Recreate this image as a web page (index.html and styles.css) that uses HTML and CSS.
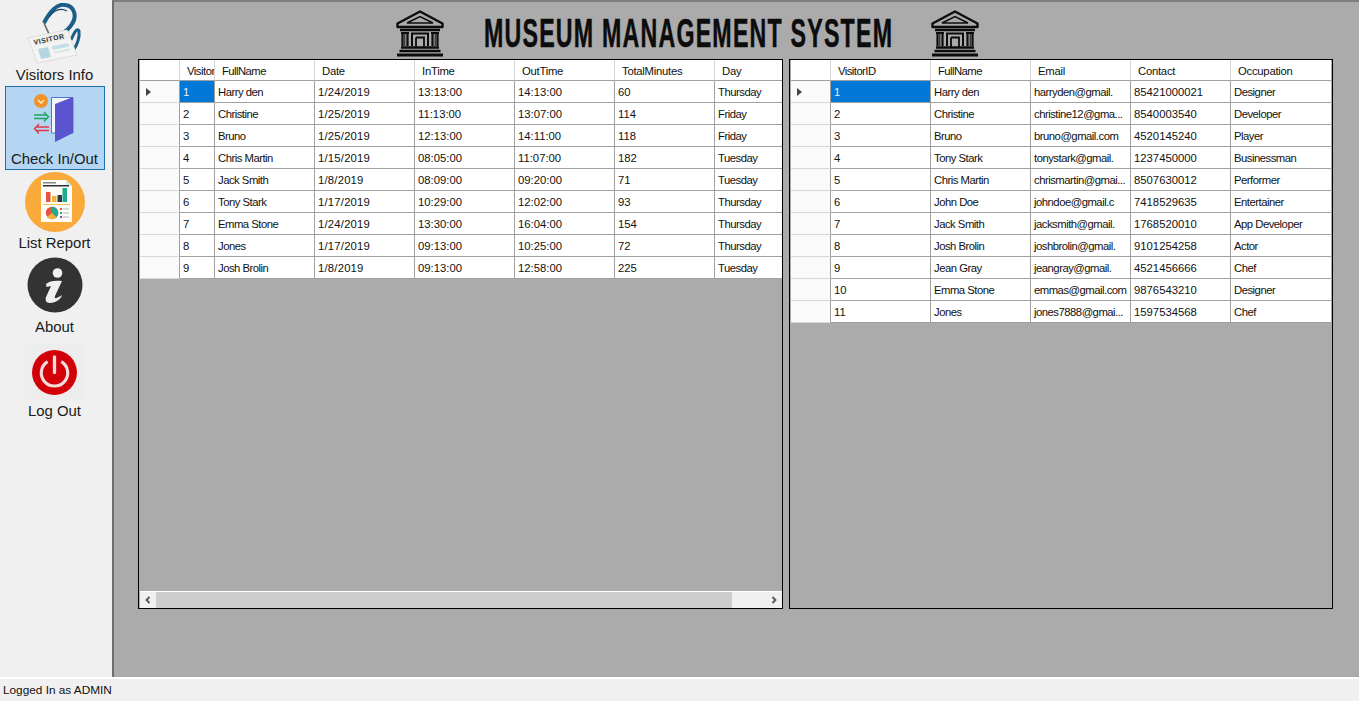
FILE: index.html
```html
<!DOCTYPE html>
<html lang="en">
<head>
<meta charset="utf-8">
<title>Museum Management System</title>
<link rel="stylesheet" href="styles.css">
</head>
<body>
<svg width="0" height="0" class="defs">
  <symbol id="museum" viewBox="0 0 50 50">
    <g fill="none" stroke="#0c0c0c">
      <path d="M25 2.500 L2.500 14.500 V18 H47.500 V14.500 Z" stroke-width="2.400" stroke-linejoin="round"/>
      <path d="M12 14 L25 7.500 L38 14 Z" stroke-width="1.500"/>
      <path d="M5 21 H45" stroke-width="2.600"/>
      <path d="M6 24 H14 M36 24 H44" stroke-width="2.200"/>
      <path d="M7.500 25 V37 M12.500 25 V37 M37.500 25 V37 M42.500 25 V37" stroke-width="2.200"/>
      <path d="M9.800 25 V37 M40.200 25 V37" stroke-width="1"/>
      <path d="M16 24.500 H34 M17 24.500 V37 M33 24.500 V37" stroke-width="2"/>
      <path d="M21 28.500 H29 V38 M21 28.500 V38" stroke-width="1.800"/>
      <path d="M6 38.500 H44" stroke-width="2.400"/>
      <path d="M4.500 42 H45.500" stroke-width="2.400"/>
      <path d="M2 46 H48" stroke-width="3"/>
    </g>
  </symbol>
</svg>
<div class="app">
  <div class="workspace">
    <nav class="side">
      <a class="nav-item">
        <svg width="60" height="64" viewBox="0 0 60 64">
          <path d="M19 20 C24 10 32 0 40 2 C50 3 52 14 47 21 C44 26 40 29 36 31" fill="none" stroke="#1a5f88" stroke-width="4"/>
          <path d="M24 14 C30 6 36 5 42 8" fill="none" stroke="#12405f" stroke-width="1.200"/>
          <path d="M46 37 C49 30 52 24 54 28 C55 34 52 42 49 46" fill="none" stroke="#1a5f88" stroke-width="3"/>
          <path d="M19 20 L24 31" stroke="#66727a" stroke-width="1.800"/>
          <polygon points="3,35 42,27 52,52 12,60" fill="#f4f5f2" stroke="#dcdedb"/>
          <polygon points="7,36 40,29 43,36 10,43" fill="#eceeea"/>
          <text class="badge-text" transform="translate(24.500 38.500) rotate(-12)" text-anchor="middle">VISITOR</text>
          <polygon points="13,46 23,44 26,54 16,56" fill="#b3d6e2"/>
          <polygon points="27,43 43,40 44.500,43.500 28,47" fill="#c3dfe6"/>
          <polygon points="29,49 45,45.500 45.500,47 29.500,50.500" fill="#cfe3e8"/>
        </svg>
        <span>Visitors Info</span>
      </a>
      <a class="nav-item active">
        <svg width="44" height="50" viewBox="0 0 44 50">
          <circle cx="8" cy="8" r="7" fill="#f0932b"/>
          <path d="M5 7 L8 10 L11 7" fill="none" stroke="#fde3b5" stroke-width="1.600"/>
          <path d="M1 22 H14 M1 25.500 H14 M11 19 L15.500 23.700 L11 28.500" fill="none" stroke="#1ea65a" stroke-width="1.400"/>
          <path d="M16 34 H3 M16 37.500 H3 M6 31 L1.500 35.700 L6 40.500" fill="none" stroke="#e3344a" stroke-width="1.400"/>
          <path d="M18.500 4.500 H40 V40 H18.500 Z" fill="#f2f5fc" stroke="#4d74d4"/>
          <polygon points="22,11 40,4 40,40 22,49" fill="#5a55cf"/>
        </svg>
        <span>Check In/Out</span>
      </a>
      <a class="nav-item">
        <svg class="ico-report" width="60" height="60" viewBox="0 0 60 60">
          <circle cx="30" cy="30" r="30" fill="#faa93b"/>
          <path d="M16 8 H41 L47 14 V50 H16 Z" fill="#fdfcf6"/>
          <path d="M41 8 L47 14 H41 Z" fill="#cfe4e6"/>
          <rect x="18" y="10" width="13" height="1.500" fill="#7a8a90"/>
          <rect x="18" y="13" width="26" height="1.500" fill="#2c3238"/>
          <rect x="21" y="20" width="4.500" height="10" fill="#e5543c"/>
          <rect x="27" y="24" width="4.500" height="6" fill="#f0b33a"/>
          <rect x="32.500" y="23" width="4.500" height="7" fill="#2c3c4a"/>
          <rect x="37.500" y="16" width="4.500" height="14" fill="#1fa98f"/>
          <rect x="18" y="32" width="27" height="1" fill="#f0c34a"/>
          <circle cx="27" cy="41" r="6.200" fill="#e5543c"/>
          <path d="M27 41 L27 34.800 A6.200 6.200 0 0 1 31.400 45.400 Z" fill="#1fa98f"/>
          <path d="M27 41 L31.400 45.400 A6.200 6.200 0 0 1 22 44.700 Z" fill="#f0b33a"/>
          <rect x="35" y="36" width="2" height="2" fill="#e5543c"/>
          <rect x="38" y="36.500" width="6" height="1" fill="#b0b6b8"/>
          <rect x="35" y="40" width="2" height="2" fill="#1fa98f"/>
          <rect x="38" y="40.500" width="6" height="1" fill="#b0b6b8"/>
          <rect x="35" y="44" width="2" height="2" fill="#8a4a9a"/>
          <rect x="38" y="44.500" width="6" height="1" fill="#b0b6b8"/>
        </svg>
        <span>List Report</span>
      </a>
      <a class="nav-item">
        <svg class="ico-info" width="56" height="56" viewBox="0 0 56 56">
          <circle cx="28" cy="28" r="27.500" fill="#333"/>
          <circle cx="30.500" cy="16" r="4.800" fill="#f0f0f0"/>
          <path d="M19 27 C22 24 28 23 35 24 L28 39 C27 42 29 42 35 38 C34 42 29 46 23 46 C19 46 18 43 19 40 L24 29 L19.500 30 Z" fill="#f0f0f0"/>
        </svg>
        <span>About</span>
      </a>
      <a class="nav-item">
        <span class="power-box">
          <svg width="45" height="45" viewBox="0 0 46 46">
            <circle cx="23" cy="23" r="23" fill="#d40009"/>
            <path d="M16 11.800 A13.500 13.500 0 1 0 30 11.800" fill="none" stroke="#f3dcdc" stroke-width="3.200"/>
            <path d="M23 7 V23" stroke="#f3dcdc" stroke-width="3.400" stroke-linecap="round"/>
          </svg>
        </span>
        <span>Log Out</span>
      </a>
    </nav>
    <main class="content">
      <header class="title-row">
        <svg class="museum"><use href="#museum"/></svg>
        <h1><span>MUSEUM MANAGEMENT SYSTEM</span></h1>
        <svg class="museum"><use href="#museum"/></svg>
      </header>
      <section class="grids">
        <div class="grid-box left">
          <div class="grid-view">
            <table>
              <colgroup><col class="c-head"><col class="c-id"><col class="c-w"><col class="c-w"><col class="c-w"><col class="c-w"><col class="c-w"><col class="c-day"></colgroup>
              <thead><tr><th></th><th class="clip">Visitor</th><th>FullName</th><th>Date</th><th>InTime</th><th>OutTime</th><th>TotalMinutes</th><th>Day</th></tr></thead>
              <tbody>
                <tr><td class="rh"><i class="cur"></i></td><td class="sel">1</td><td>Harry den</td><td>1/24/2019</td><td>13:13:00</td><td>14:13:00</td><td>60</td><td>Thursday</td></tr>
                <tr><td class="rh"></td><td>2</td><td>Christine</td><td>1/25/2019</td><td>11:13:00</td><td>13:07:00</td><td>114</td><td>Friday</td></tr>
                <tr><td class="rh"></td><td>3</td><td>Bruno</td><td>1/25/2019</td><td>12:13:00</td><td>14:11:00</td><td>118</td><td>Friday</td></tr>
                <tr><td class="rh"></td><td>4</td><td>Chris Martin</td><td>1/15/2019</td><td>08:05:00</td><td>11:07:00</td><td>182</td><td>Tuesday</td></tr>
                <tr><td class="rh"></td><td>5</td><td>Jack Smith</td><td>1/8/2019</td><td>08:09:00</td><td>09:20:00</td><td>71</td><td>Tuesday</td></tr>
                <tr><td class="rh"></td><td>6</td><td>Tony Stark</td><td>1/17/2019</td><td>10:29:00</td><td>12:02:00</td><td>93</td><td>Thursday</td></tr>
                <tr><td class="rh"></td><td>7</td><td>Emma Stone</td><td>1/24/2019</td><td>13:30:00</td><td>16:04:00</td><td>154</td><td>Thursday</td></tr>
                <tr><td class="rh"></td><td>8</td><td>Jones</td><td>1/17/2019</td><td>09:13:00</td><td>10:25:00</td><td>72</td><td>Thursday</td></tr>
                <tr><td class="rh"></td><td>9</td><td>Josh Brolin</td><td>1/8/2019</td><td>09:13:00</td><td>12:58:00</td><td>225</td><td>Tuesday</td></tr>
              </tbody>
            </table>
          </div>
          <div class="hscroll">
            <span class="arrow"><svg width="8" height="8" viewBox="0 0 8 8"><path d="M5.500 1 L2.500 4 L5.500 7" fill="none" stroke="#555" stroke-width="1.800"/></svg></span>
            <span class="thumb"></span>
            <span class="track"></span>
            <span class="arrow"><svg width="8" height="8" viewBox="0 0 8 8"><path d="M2.500 1 L5.500 4 L2.500 7" fill="none" stroke="#555" stroke-width="1.800"/></svg></span>
          </div>
        </div>
        <div class="grid-box right">
          <div class="grid-view">
            <table>
              <colgroup><col class="c-head"><col class="c-w"><col class="c-w"><col class="c-w"><col class="c-w"><col class="c-w"></colgroup>
              <thead><tr><th></th><th>VisitorID</th><th>FullName</th><th>Email</th><th>Contact</th><th>Occupation</th></tr></thead>
              <tbody>
                <tr><td class="rh"><i class="cur"></i></td><td class="sel">1</td><td>Harry den</td><td>harryden@gmail.</td><td>85421000021</td><td>Designer</td></tr>
                <tr><td class="rh"></td><td>2</td><td>Christine</td><td>christine12@gma...</td><td>8540003540</td><td>Developer</td></tr>
                <tr><td class="rh"></td><td>3</td><td>Bruno</td><td>bruno@gmail.com</td><td>4520145240</td><td>Player</td></tr>
                <tr><td class="rh"></td><td>4</td><td>Tony Stark</td><td>tonystark@gmail.</td><td>1237450000</td><td>Businessman</td></tr>
                <tr><td class="rh"></td><td>5</td><td>Chris Martin</td><td>chrismartin@gmai...</td><td>8507630012</td><td>Performer</td></tr>
                <tr><td class="rh"></td><td>6</td><td>John Doe</td><td>johndoe@gmail.c</td><td>7418529635</td><td>Entertainer</td></tr>
                <tr><td class="rh"></td><td>7</td><td>Jack Smith</td><td>jacksmith@gmail.</td><td>1768520010</td><td>App Developer</td></tr>
                <tr><td class="rh"></td><td>8</td><td>Josh Brolin</td><td>joshbrolin@gmail.</td><td>9101254258</td><td>Actor</td></tr>
                <tr><td class="rh"></td><td>9</td><td>Jean Gray</td><td>jeangray@gmail.</td><td>4521456666</td><td>Chef</td></tr>
                <tr><td class="rh"></td><td>10</td><td>Emma Stone</td><td>emmas@gmail.com</td><td>9876543210</td><td>Designer</td></tr>
                <tr><td class="rh"></td><td>11</td><td>Jones</td><td>jones7888@gmai...</td><td>1597534568</td><td>Chef</td></tr>
              </tbody>
            </table>
          </div>
        </div>
      </section>
    </main>
  </div>
  <footer class="status">Logged In as ADMIN</footer>
</div>
</body>
</html>
```
FILE: styles.css
```css
* { box-sizing: border-box; }
html, body { margin: 0; height: 100%; overflow: hidden; }
body { font-family: "Liberation Sans", Arial, sans-serif; background: #f0f0f0; color: #111; }
.defs { position: absolute; }
.app { height: 701px; display: flex; flex-direction: column; }
.workspace { flex: 1; display: flex; min-height: 0; }

.side { width: 112px; flex: none; background: #f0f0f0; display: flex; flex-direction: column; padding: 4px 0 0 5px; }
.nav-item { width: 100px; height: 84px; display: flex; flex-direction: column; align-items: center; justify-content: flex-end; padding: 0 1px 1px 0; font-size: 14.9px; line-height: 17px; color: #1a1a1a; border: 1px solid transparent; }
.nav-item svg { display: block; flex: none; }
.nav-item span { display: block; }
.nav-item:first-child { height: 82px; }
.nav-item.active { background: #b5d6f2; border-color: #1f6fa8; }
.nav-item.active svg { margin-bottom: 8px; }
.nav-item .ico-report { margin-bottom: 3px; }
.nav-item .ico-info { margin-bottom: 6px; }
.badge-text { font: bold 6.8px "Liberation Sans", sans-serif; letter-spacing: 0.6px; fill: #2a2a2a; }
.power-box { width: 60px; height: 58px; background: #ededed; display: flex !important; align-items: center; justify-content: center; margin-bottom: 2px; }

.content { flex: 1; min-width: 0; background: #ababab; border-left: 2px solid #6e6e6e; border-top: 2px solid #7f7f7f; padding-left: 24px; }
.title-row { height: 57px; display: flex; align-items: center; padding-left: 257px; }
.museum { width: 50px; height: 50px; flex: none; margin-top: 6px; }
.title-row h1 { width: 409px; flex: none; margin: 4px 37px 0 39px; font: bold 40px/1 "Liberation Sans", sans-serif; letter-spacing: 2.08px; color: #0c0c0c; white-space: nowrap; }
.title-row h1 span { display: inline-block; transform: scaleX(0.58); transform-origin: left center; -webkit-text-stroke: 0.5px #0c0c0c; }

.grids { display: flex; gap: 6px; align-items: flex-start; }
.grid-box { height: 550px; background: #ababab; border: 1px solid #000; padding-left: 1px; display: flex; flex-direction: column; justify-content: space-between; }
.grid-box.left { width: 645px; }
.grid-box.right { width: 544px; }
.grid-view { overflow: hidden; }
table { border-collapse: separate; border-spacing: 0; table-layout: fixed; font-size: 11.3px; }
.left table { width: 642px; }
.right table { width: 540px; }
.c-head { width: 40px; }
.c-id { width: 35px; }
.c-w { width: 100px; }
.c-day { width: 67px; }
th { height: 21px; background: #fff; font-weight: normal; text-align: left; padding: 1px 0 0 7px; letter-spacing: -0.25px; border-right: 1px solid #d6d6d6; border-bottom: 1px solid #a0a0a0; white-space: nowrap; overflow: hidden; }
th.clip { letter-spacing: -0.5px; }
th:nth-child(3), .right th:nth-child(2) { letter-spacing: -0.55px; }
td { height: 22px; background: #fff; padding: 0 0 0 3px; border-right: 1px solid #a0a0a0; border-bottom: 1px solid #a0a0a0; white-space: nowrap; overflow: hidden; }
.left td:nth-child(3), .left td:nth-child(8),
.right td:nth-child(3), .right td:nth-child(4), .right td:nth-child(6) { letter-spacing: -0.5px; }
.left td:nth-child(4) { letter-spacing: 0.2px; }
th:last-child, td:last-child { border-right: 0; }
td.rh { background: #fafafa; border-right: 1px solid #a0a0a0; border-bottom: 1px solid #d8d8d8; padding: 0; }
td.sel { background: #0078d7; color: #eaf4ff; }
.cur { display: block; width: 0; height: 0; margin-left: 6px; border-left: 5px solid #444; border-top: 4.5px solid transparent; border-bottom: 4.5px solid transparent; }
.hscroll { height: 17px; display: flex; background: #f0f0f0; border-top: 1px solid #fff; }
.arrow { width: 16px; flex: none; display: flex; align-items: center; justify-content: center; }
.thumb { width: 576px; background: #cdcdcd; }
.track { flex: 1; }

.status { height: 24px; flex: none; background: #f0f0f0; border-top: 2px solid #fff; font-size: 11.8px; line-height: 22px; padding-left: 3px; color: #111; }
```
